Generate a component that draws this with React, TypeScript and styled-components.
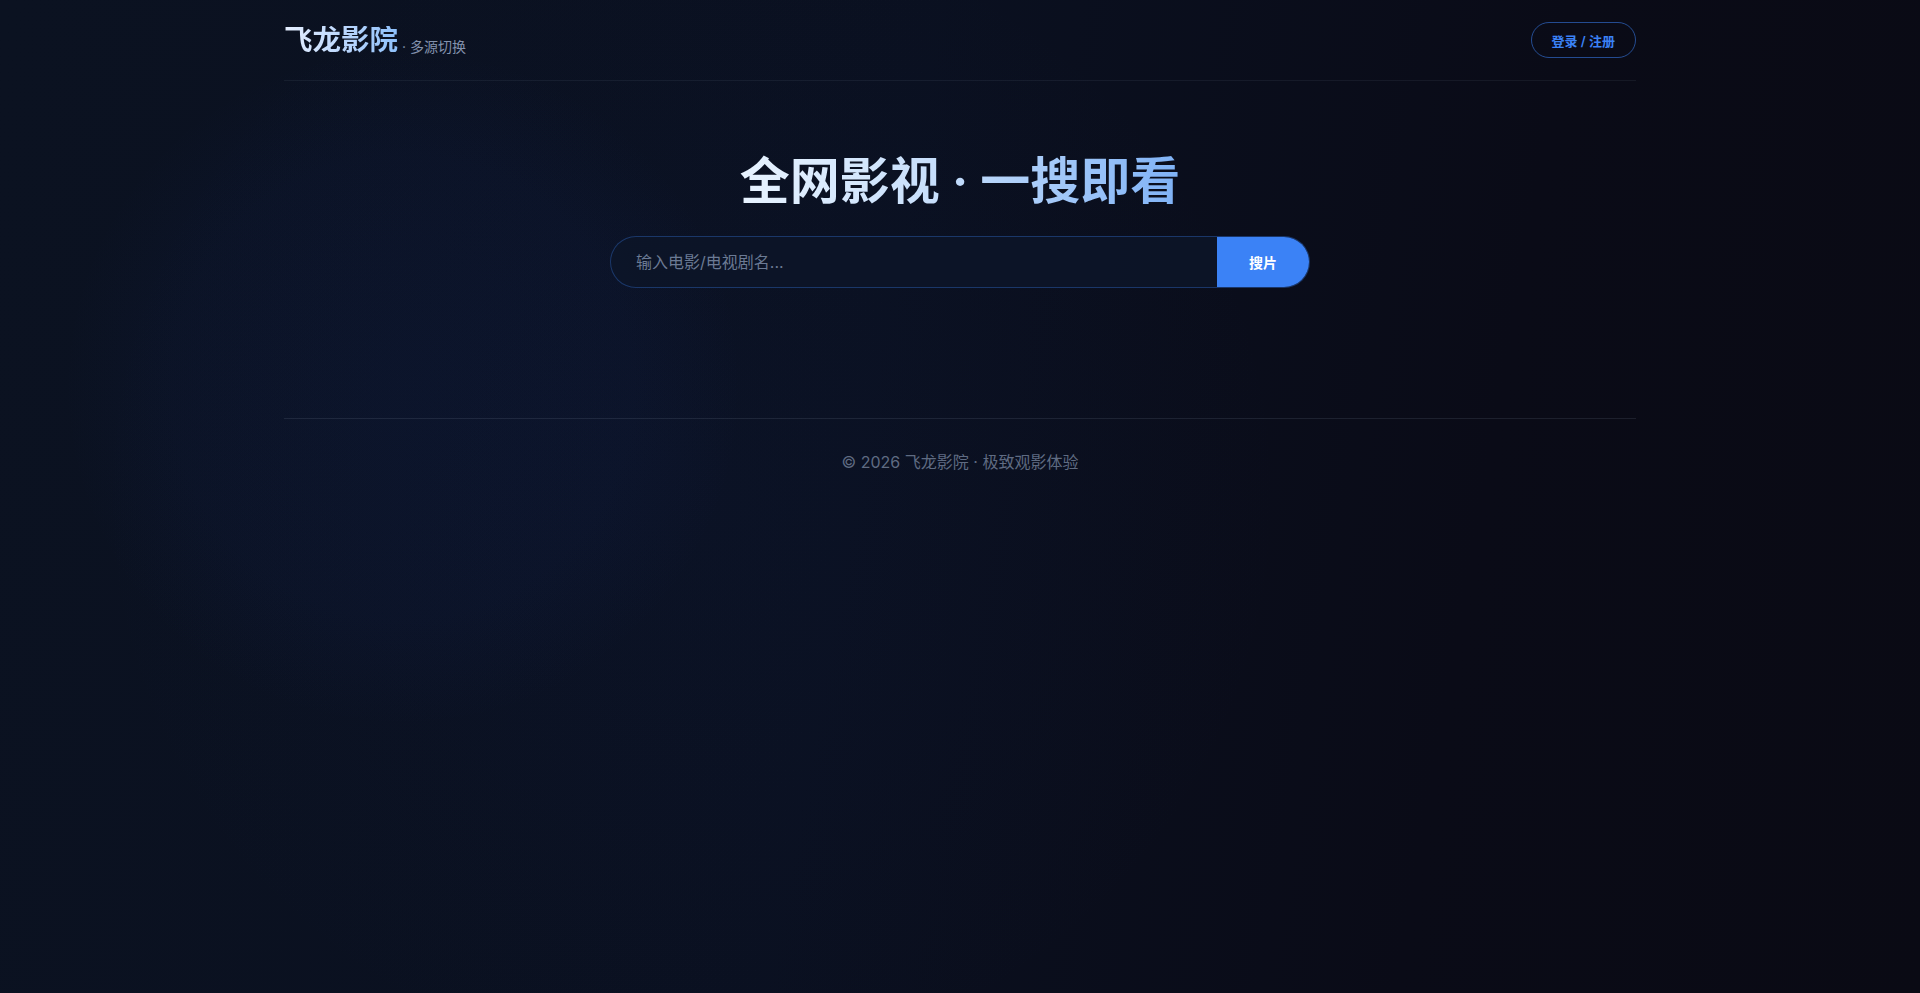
import React, { useState } from 'react';
import styled, { createGlobalStyle } from 'styled-components';

const GlobalStyle = createGlobalStyle`
  * { box-sizing: border-box; }
  html, body { margin: 0; padding: 0; }
  body {
    min-height: 100vh;
    font-family: Inter, "Noto Sans CJK SC", "Noto Sans", sans-serif;
    color: #e2e8f0;
    background:
      radial-gradient(circle at 21% 39%, rgba(30, 64, 175, 0.06) 0, rgba(30, 64, 175, 0.045) 230px, rgba(30, 64, 175, 0.015) 300px, transparent 340px),
      radial-gradient(ellipse 42% 80% at 36% 50%, rgba(30, 58, 138, 0.05), transparent 75%),
      linear-gradient(100deg, #0b1221 0%, #0a1020 45%, #0a0b17 75%, #0a0a14 100%);
    background-attachment: fixed;
  }
`;

const Page = styled.div`
  max-width: 1400px;
  margin: 0 auto;
  padding: 0 24px;
`;

const Header = styled.header`
  display: flex;
  align-items: center;
  justify-content: space-between;
  padding: 22px 0;
  border-bottom: 1px solid rgba(148, 163, 184, 0.09);
`;

const Brand = styled.div`
  display: flex;
  align-items: flex-end;
`;

const Logo = styled.span`
  font-size: 28.5px;
  font-weight: 700;
  line-height: 1;
  background: linear-gradient(90deg, #e6efff 0%, #b4d3fc 60%, #8dc0fb 100%);
  -webkit-background-clip: text;
  background-clip: text;
  color: transparent;
`;

const Tagline = styled.span`
  margin-left: 4px;
  font-size: 14px;
  line-height: 1;
  color: #8391ad;
`;

const LoginButton = styled.button`
  height: 36px;
  padding: 0 20px;
  border-radius: 999px;
  border: 1px solid rgba(59, 130, 246, 0.55);
  background: transparent;
  color: #3b82f6;
  font-family: inherit;
  font-size: 13px;
  font-weight: 600;
  cursor: pointer;
`;

const Hero = styled.section`
  display: flex;
  flex-direction: column;
  align-items: center;
  padding: 70px 0 130px;
`;

const Title = styled.h1`
  margin: 0 0 25px;
  font-size: 50px;
  line-height: 1.2;
  font-weight: 700;
  background: linear-gradient(90deg, #e8f3ff 0%, #c6defb 45%, #7fb2f6 100%);
  -webkit-background-clip: text;
  background-clip: text;
  color: transparent;
`;

const SearchBar = styled.form`
  display: flex;
  width: 100%;
  max-width: 700px;
  height: 52px;
  border-radius: 26px;
  border: 1px solid rgba(59, 130, 246, 0.32);
  background: rgba(12, 21, 40, 0.9);
  overflow: hidden;
`;

const SearchInput = styled.input`
  flex: 1;
  min-width: 0;
  padding: 0 25px;
  border: none;
  outline: none;
  background: transparent;
  color: #e2e8f0;
  font-family: inherit;
  font-size: 16px;

  &::placeholder {
    color: #6b7a94;
  }
`;

const SearchButton = styled.button`
  padding: 0 32px;
  border: none;
  background: #3b82f6;
  color: #ffffff;
  font-family: inherit;
  font-size: 14px;
  font-weight: 700;
  cursor: pointer;
`;

const Footer = styled.footer`
  padding: 31px 0 40px;
  border-top: 1px solid rgba(148, 163, 184, 0.14);
  text-align: center;
  font-size: 16px;
  line-height: 24px;
  color: #5f6b82;
`;

export default function App() {
  const [query, setQuery] = useState('');

  return (
    <>
      <GlobalStyle />
      <Page>
        <Header>
          <Brand>
            <Logo>飞龙影院</Logo>
            <Tagline>· 多源切换</Tagline>
          </Brand>
          <LoginButton>登录 / 注册</LoginButton>
        </Header>

        <Hero>
          <Title>全网影视 · 一搜即看</Title>
          <SearchBar onSubmit={(e) => e.preventDefault()}>
            <SearchInput
              value={query}
              onChange={(e) => setQuery(e.target.value)}
              placeholder="输入电影/电视剧名..."
            />
            <SearchButton type="submit">搜片</SearchButton>
          </SearchBar>
        </Hero>

        <Footer>© 2026 飞龙影院 · 极致观影体验</Footer>
      </Page>
    </>
  );
}
